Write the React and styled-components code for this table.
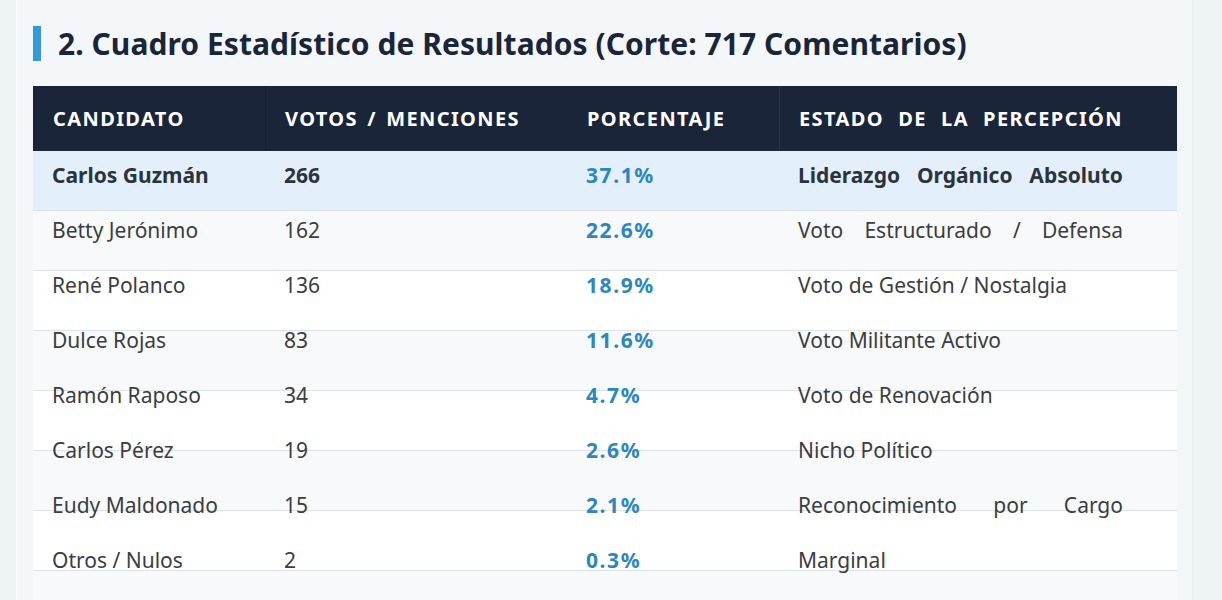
import React from "react";
import styled, { createGlobalStyle } from "styled-components";

const GlobalStyle = createGlobalStyle`
  html, body { margin: 0; padding: 0; }
  body {
    background: #eef3f6;
    font-family: "Noto Sans", Roboto, "Liberation Sans", sans-serif;
    overflow: hidden;
  }
`;

const Page = styled.div`
  display: flex;
  padding-left: 16px;
  min-height: 600px;
`;

const Panel = styled.main`
  width: 1177px;
  border-left: 1px solid #fbfcfd;
  border-right: 1px solid #e8eef2;
  background: #f4f7fa;
  padding: 26px 0 0 16px;
  box-sizing: border-box;
`;

const Title = styled.h2`
  margin: 0 0 25px 0;
  height: 35px;
  display: flex;
  align-items: center;
  border-left: 8px solid #3498db;
  padding-left: 17px;
  font-size: 30px;
  font-weight: 700;
  color: #1b2539;
  letter-spacing: 0.05px;
`;

const Table = styled.section`
  width: 1144px;
`;

const cols = "232px 302px 212px 398px";

const HeadRow = styled.div`
  display: grid;
  grid-template-columns: ${cols};
  height: 65px;
  background: #1b253a;
`;

const HeadCell = styled.div`
  display: flex;
  align-items: center;
  padding: 0 ${(p) => p.$pr || 20}px 0 19px;
  border-left: 1px solid ${(p) => (p.$sep ? p.$sep : "transparent")};
  color: #ffffff;
  font-size: 20px;
  font-weight: 700;
  letter-spacing: 1.4px;
  text-transform: uppercase;
`;

const HeadText = styled.span`
  flex: 1;
  text-align: ${(p) => (p.$spread ? "justify" : "left")};
  text-align-last: ${(p) => (p.$spread ? "justify" : "auto")};
`;

const Body = styled.div`
  padding-bottom: 24px;
  background:
    linear-gradient(
        to bottom,
        #e3f0fb 0,
        #e3f0fb 59px,
        #dde3e8 59px,
        #dde3e8 60px,
        transparent 60px
      )
      0 0 / 100% 60px no-repeat,
    linear-gradient(
        to bottom,
        #f8f9fa 0,
        #f8f9fa 59px,
        #dde3e8 59px,
        #dde3e8 60px,
        #ffffff 60px,
        #ffffff 119px,
        #dde3e8 119px,
        #dde3e8 120px
      )
      0 60px / 100% 120px repeat-y;
`;

const Row = styled.div`
  display: grid;
  grid-template-columns: ${cols};
  height: 55px;
  box-sizing: border-box;
  padding-top: 12px;
  line-height: 24px;
  font-size: 21px;
  color: ${(p) => (p.$lead ? "#2b3340" : "#3a3d42")};
  font-weight: ${(p) => (p.$lead ? 700 : 400)};
`;

const Cell = styled.div`
  padding: 0 ${(p) => p.$pr || 20}px 0 19px;
  white-space: nowrap;
  text-align: ${(p) => (p.$spread ? "justify" : "left")};
  text-align-last: ${(p) => (p.$spread ? "justify" : "auto")};
`;

const Pct = styled(Cell)`
  color: #2e86c1;
  font-weight: 700;
  letter-spacing: 1.6px;
`;

const rows = [
  { name: "Carlos Guzmán", votes: 266, pct: "37.1%", state: "Liderazgo Orgánico Absoluto", spread: true, lead: true },
  { name: "Betty Jerónimo", votes: 162, pct: "22.6%", state: "Voto Estructurado / Defensa", spread: true },
  { name: "René Polanco", votes: 136, pct: "18.9%", state: "Voto de Gestión / Nostalgia" },
  { name: "Dulce Rojas", votes: 83, pct: "11.6%", state: "Voto Militante Activo" },
  { name: "Ramón Raposo", votes: 34, pct: "4.7%", state: "Voto de Renovación" },
  { name: "Carlos Pérez", votes: 19, pct: "2.6%", state: "Nicho Político" },
  { name: "Eudy Maldonado", votes: 15, pct: "2.1%", state: "Reconocimiento por Cargo", spread: true },
  { name: "Otros / Nulos", votes: 2, pct: "0.3%", state: "Marginal" },
];

export default function App() {
  return (
    <>
      <GlobalStyle />
      <Page>
        <Panel>
          <Title>2. Cuadro Estadístico de Resultados (Corte: 717 Comentarios)</Title>
          <Table>
            <HeadRow>
              <HeadCell>
                <HeadText>Candidato</HeadText>
              </HeadCell>
              <HeadCell $sep="#151d2e" $pr={47}>
                <HeadText $spread>Votos / Menciones</HeadText>
              </HeadCell>
              <HeadCell>
                <HeadText>Porcentaje</HeadText>
              </HeadCell>
              <HeadCell $sep="#2a3447" $pr={54}>
                <HeadText $spread>Estado de la Percepción</HeadText>
              </HeadCell>
            </HeadRow>
            <Body>
              {rows.map((r) => (
                <Row key={r.name} $lead={r.lead}>
                  <Cell>{r.name}</Cell>
                  <Cell>{r.votes}</Cell>
                  <Pct>{r.pct}</Pct>
                  <Cell $spread={r.spread} $pr={54}>
                    {r.state}
                  </Cell>
                </Row>
              ))}
            </Body>
          </Table>
        </Panel>
      </Page>
    </>
  );
}
